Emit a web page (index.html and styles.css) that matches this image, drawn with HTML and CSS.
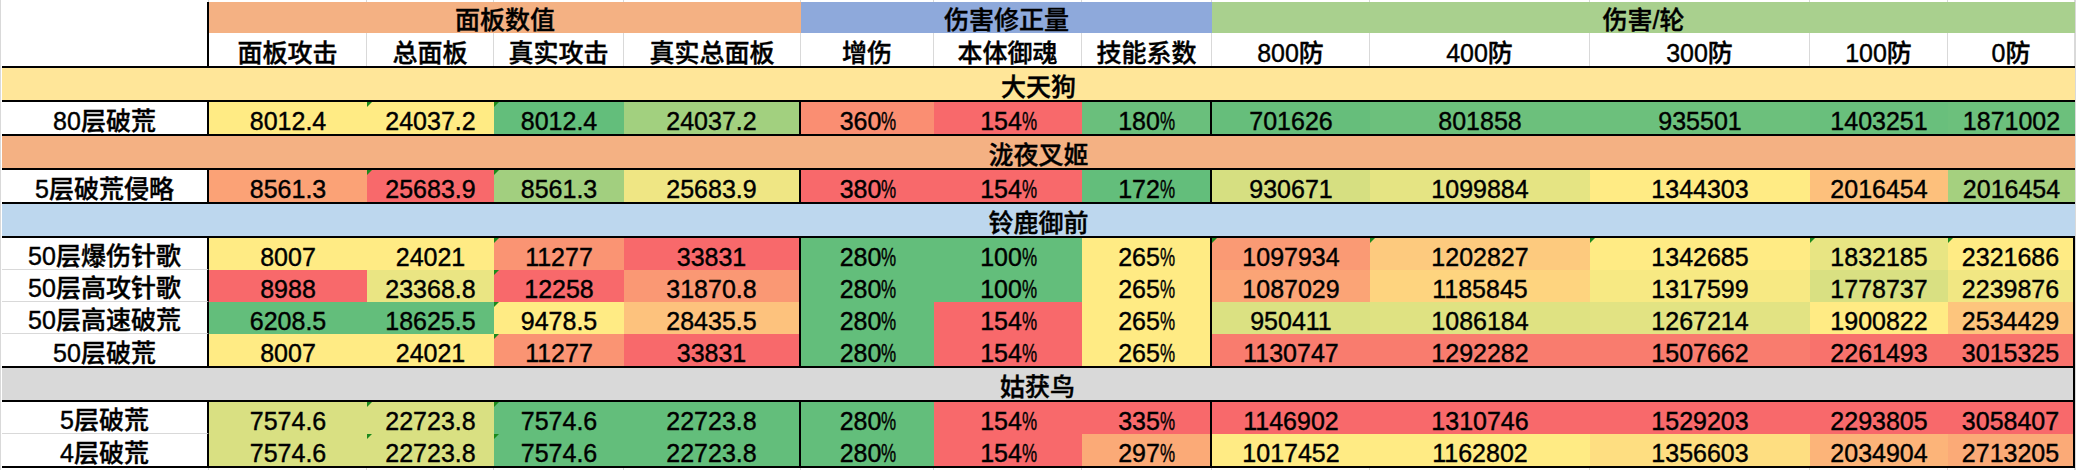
FILE: index.html
```html
<!DOCTYPE html>
<html lang="zh-CN">
<head>
<meta charset="utf-8">
<title>伤害对比</title>
<link rel="stylesheet" href="styles.css">
</head>
<body>
<div class="sheet">
  <div class="row sliver">
    <div class="cell"></div><div class="cell"></div><div class="cell"></div><div class="cell"></div><div class="cell"></div><div class="cell"></div><div class="cell"></div><div class="cell"></div><div class="cell"></div><div class="cell"></div><div class="cell"></div><div class="cell"></div><div class="cell"></div>
  </div>

  <div class="row head1">
    <div class="cell sep"></div>
    <div class="cell band band-panel">面板数值</div>
    <div class="cell band band-mod">伤害修正量</div>
    <div class="cell band band-dmg">伤害/轮</div>
  </div>

  <div class="row head2 bb">
    <div class="cell sep"></div>
    <div class="cell gl">面板攻击</div>
    <div class="cell gl">总面板</div>
    <div class="cell gl">真实攻击</div>
    <div class="cell gl">真实总面板</div>
    <div class="cell gl">增伤</div>
    <div class="cell gl">本体御魂</div>
    <div class="cell gl">技能系数</div>
    <div class="cell gl">800防</div>
    <div class="cell gl">400防</div>
    <div class="cell gl">300防</div>
    <div class="cell gl">100防</div>
    <div class="cell gl">0防</div>
  </div>

  <!-- 大天狗 -->
  <div class="row group bb"><div class="cell full grp-gold">大天狗</div></div>
  <div class="row data bb">
    <div class="cell name sep">80层破荒</div>
    <div class="cell" style="background:#FFEB84">8012.4</div>
    <div class="cell tri" style="background:#FFEB84">24037.2</div>
    <div class="cell tri" style="background:#63BE7B">8012.4</div>
    <div class="cell sep" style="background:#A2D07F">24037.2</div>
    <div class="cell" style="background:#FA8E72">360<span class="pct">%</span></div>
    <div class="cell" style="background:#F8696B">154<span class="pct">%</span></div>
    <div class="cell sep" style="background:#6ABF7C">180<span class="pct">%</span></div>
    <div class="cell" style="background:#66BE7B">701626</div>
    <div class="cell" style="background:#6CC07C">801858</div>
    <div class="cell" style="background:#6CC07C">935501</div>
    <div class="cell" style="background:#69BF7C">1403251</div>
    <div class="cell" style="background:#6CC07C">1871002</div>
  </div>

  <!-- 泷夜叉姬 -->
  <div class="row group bb"><div class="cell full grp-orange">泷夜叉姬</div></div>
  <div class="row data bb">
    <div class="cell name sep">5层破荒侵略</div>
    <div class="cell" style="background:#FBA276">8561.3</div>
    <div class="cell tri" style="background:#F8696B">25683.9</div>
    <div class="cell tri" style="background:#A2CF7F">8561.3</div>
    <div class="cell sep" style="background:#EFE684">25683.9</div>
    <div class="cell" style="background:#F8696B">380<span class="pct">%</span></div>
    <div class="cell" style="background:#F8696B">154<span class="pct">%</span></div>
    <div class="cell sep" style="background:#63BE7B">172<span class="pct">%</span></div>
    <div class="cell" style="background:#D6DF81">930671</div>
    <div class="cell" style="background:#E5E483">1099884</div>
    <div class="cell" style="background:#FFEB84">1344303</div>
    <div class="cell" style="background:#FDC07C">2016454</div>
    <div class="cell" style="background:#A5D07F">2016454</div>
  </div>

  <!-- 铃鹿御前 -->
  <div class="row group bb"><div class="cell full grp-blue">铃鹿御前</div></div>
  <div class="row data inner">
    <div class="cell name sep">50层爆伤针歌</div>
    <div class="cell" style="background:#FFEB84">8007</div>
    <div class="cell" style="background:#FFEB84">24021</div>
    <div class="cell tri" style="background:#FA9473">11277</div>
    <div class="cell sep" style="background:#F8696B">33831</div>
    <div class="cell" style="background:#63BE7B">280<span class="pct">%</span></div>
    <div class="cell" style="background:#63BE7B">100<span class="pct">%</span></div>
    <div class="cell sep" style="background:#FFEB84">265<span class="pct">%</span></div>
    <div class="cell tri" style="background:#FA9A74">1097934</div>
    <div class="cell tri" style="background:#FDCA7E">1202827</div>
    <div class="cell tri" style="background:#FFEB84">1342685</div>
    <div class="cell tri" style="background:#E8E583">1832185</div>
    <div class="cell tri edge" style="background:#FFEB84">2321686</div>
  </div>
  <div class="row data inner">
    <div class="cell name sep">50层高攻针歌</div>
    <div class="cell" style="background:#F8696B">8988</div>
    <div class="cell" style="background:#EAE583">23368.8</div>
    <div class="cell tri" style="background:#F8696B">12258</div>
    <div class="cell sep" style="background:#FA9874">31870.8</div>
    <div class="cell" style="background:#63BE7B">280<span class="pct">%</span></div>
    <div class="cell" style="background:#63BE7B">100<span class="pct">%</span></div>
    <div class="cell sep" style="background:#FFEB84">265<span class="pct">%</span></div>
    <div class="cell" style="background:#FBA476">1087029</div>
    <div class="cell" style="background:#FED47F">1185845</div>
    <div class="cell" style="background:#F7E983">1317599</div>
    <div class="cell" style="background:#D9E082">1778737</div>
    <div class="cell edge" style="background:#F1E783">2239876</div>
  </div>
  <div class="row data inner">
    <div class="cell name sep">50层高速破荒</div>
    <div class="cell" style="background:#63BE7B">6208.5</div>
    <div class="cell" style="background:#63BE7B">18625.5</div>
    <div class="cell tri" style="background:#FFEB84">9478.5</div>
    <div class="cell sep" style="background:#FDC27D">28435.5</div>
    <div class="cell" style="background:#63BE7B">280<span class="pct">%</span></div>
    <div class="cell" style="background:#F8696B">154<span class="pct">%</span></div>
    <div class="cell sep" style="background:#FFEB84">265<span class="pct">%</span></div>
    <div class="cell" style="background:#DBE182">950411</div>
    <div class="cell" style="background:#DFE282">1086184</div>
    <div class="cell" style="background:#E2E383">1267214</div>
    <div class="cell" style="background:#FFEB84">1900822</div>
    <div class="cell edge" style="background:#FDC57D">2534429</div>
  </div>
  <div class="row data bb">
    <div class="cell name sep">50层破荒</div>
    <div class="cell" style="background:#FFEB84">8007</div>
    <div class="cell" style="background:#FFEB84">24021</div>
    <div class="cell tri" style="background:#FA9473">11277</div>
    <div class="cell sep" style="background:#F8696B">33831</div>
    <div class="cell" style="background:#63BE7B">280<span class="pct">%</span></div>
    <div class="cell" style="background:#F8696B">154<span class="pct">%</span></div>
    <div class="cell sep" style="background:#FFEB84">265<span class="pct">%</span></div>
    <div class="cell" style="background:#F97C6E">1130747</div>
    <div class="cell" style="background:#F97C6E">1292282</div>
    <div class="cell" style="background:#F97C6E">1507662</div>
    <div class="cell" style="background:#F8726C">2261493</div>
    <div class="cell edge" style="background:#F8726C">3015325</div>
  </div>

  <!-- 姑获鸟 -->
  <div class="row group bb"><div class="cell full grp-gray edge">姑获鸟</div></div>
  <div class="row data inner">
    <div class="cell name sep">5层破荒</div>
    <div class="cell" style="background:#D9E082">7574.6</div>
    <div class="cell tri" style="background:#D9E082">22723.8</div>
    <div class="cell tri" style="background:#63BE7B">7574.6</div>
    <div class="cell sep" style="background:#63BE7B">22723.8</div>
    <div class="cell" style="background:#63BE7B">280<span class="pct">%</span></div>
    <div class="cell" style="background:#F8696B">154<span class="pct">%</span></div>
    <div class="cell sep" style="background:#F8696B">335<span class="pct">%</span></div>
    <div class="cell" style="background:#F8696B">1146902</div>
    <div class="cell" style="background:#F8696B">1310746</div>
    <div class="cell" style="background:#F8696B">1529203</div>
    <div class="cell" style="background:#F8696B">2293805</div>
    <div class="cell edge" style="background:#F8696B">3058407</div>
  </div>
  <div class="row data bb">
    <div class="cell name sep">4层破荒</div>
    <div class="cell" style="background:#D9E082">7574.6</div>
    <div class="cell tri" style="background:#D9E082">22723.8</div>
    <div class="cell tri" style="background:#63BE7B">7574.6</div>
    <div class="cell sep" style="background:#63BE7B">22723.8</div>
    <div class="cell" style="background:#63BE7B">280<span class="pct">%</span></div>
    <div class="cell" style="background:#F8696B">154<span class="pct">%</span></div>
    <div class="cell sep" style="background:#FBAA77">297<span class="pct">%</span></div>
    <div class="cell" style="background:#FFEB84">1017452</div>
    <div class="cell" style="background:#FFEB84">1162802</div>
    <div class="cell" style="background:#FEDE81">1356603</div>
    <div class="cell" style="background:#FCB479">2034904</div>
    <div class="cell edge" style="background:#FBAA77">2713205</div>
  </div>

  <div class="row sliver">
    <div class="cell"></div><div class="cell"></div><div class="cell"></div><div class="cell"></div><div class="cell"></div><div class="cell"></div><div class="cell"></div><div class="cell"></div><div class="cell"></div><div class="cell"></div><div class="cell"></div><div class="cell"></div><div class="cell"></div>
  </div>
</div>
</body>
</html>
```

FILE: styles.css
```css
* { box-sizing: border-box; }

html, body {
  margin: 0;
  padding: 0;
  background: #ffffff;
}

body {
  width: 2078px;
  height: 471px;
  overflow: hidden;
  font-family: "Liberation Sans", "Noto Sans CJK SC", sans-serif;
  font-size: 25px;
  font-weight: 500;
  color: #000000;
  -webkit-text-stroke: 0.4px #000000;
}

.sheet {
  width: 2076px;
  padding-left: 1px;
  border-left: 1px solid #d9d9d9;
  border-right: 1px solid #d9d9d9;
  display: flex;
  flex-direction: column;
}

.row {
  display: grid;
  grid-template-columns: 207px 158px 127px 130px 177px 133px 148px 130px 158px 220px 220px 138px 127px;
  width: 2073px;
  box-sizing: content-box;
}

.cell {
  position: relative;
  display: flex;
  justify-content: center;
  align-items: flex-end;
  line-height: 25px;
  white-space: nowrap;
  overflow: hidden;
}

.sliver { height: 2px; }
.sliver .cell { border-right: 1px solid #d9d9d9; }

.head1 { height: 31px; }
.head2 { height: 33px; }
.group { height: 32px; }
.data { height: 32px; }

.bb { border-bottom: 2px solid #000000; }

.sep { border-right: 2px solid #000000; }
.edge { border-right: 2px solid #000000; }
.gl { border-right: 1px solid #d9d9d9; }

.inner .name { border-bottom: 1px solid #d9d9d9; }

.band-panel { grid-column: 2 / 6; background: #f4b183; }
.band-mod { grid-column: 6 / 9; background: #8ea9db; }
.band-dmg { grid-column: 9 / 14; background: #a9d08e; }

.full { grid-column: 1 / 14; }
.grp-gold { background: #ffe699; }
.grp-orange { background: #f4b183; }
.grp-blue { background: #bdd7ee; }
.grp-gray { background: #d9d9d9; }

.name { background: #ffffff; }

.tri::before {
  content: "";
  position: absolute;
  top: 0;
  left: 0;
  width: 0;
  height: 0;
  border-top: 5px solid #1c8a1c;
  border-right: 5px solid transparent;
}

.pct {
  display: inline-block;
  width: 0.56em;
  transform: scaleX(0.68);
  transform-origin: left bottom;
}
```
